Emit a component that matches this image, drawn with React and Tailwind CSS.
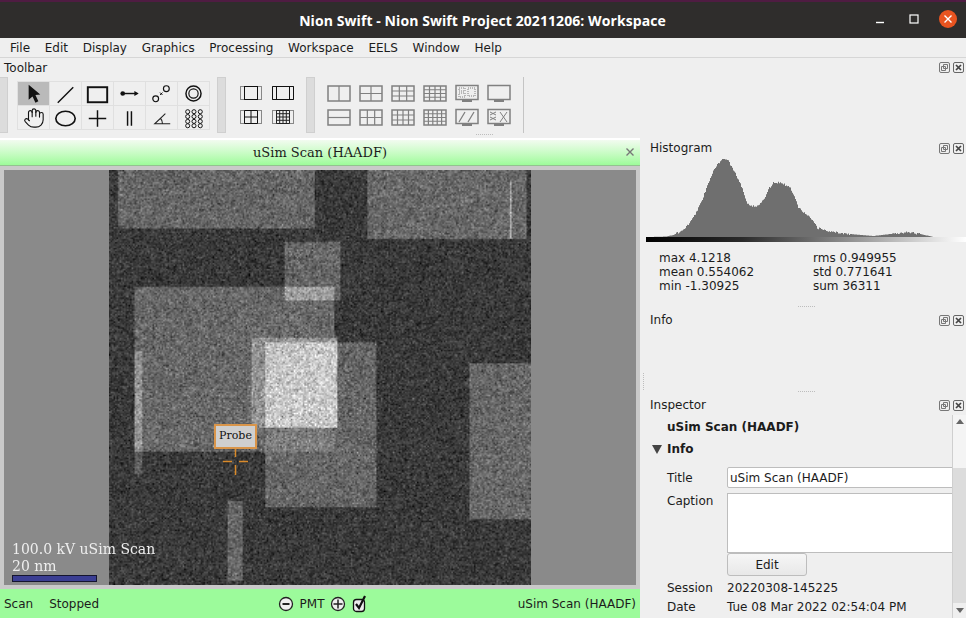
import React, { useEffect, useRef } from "react";
import { Hand } from "lucide-react";

const menus = ["File", "Edit", "Display", "Graphics", "Processing", "Workspace", "EELS", "Window", "Help"];

// histogram outline, in page pixels
const histPoints = [
  [646, 237], [665, 236.6], [673, 235], [683, 230], [690, 222], [696, 212], [702, 200], [707, 185], [712, 173],
  [717, 165], [723, 158], [728, 161], [734, 172], [740, 183], [744, 195], [747, 203], [752, 206], [755, 207],
  [760, 203], [765, 197], [769, 188], [773, 183], [780, 182], [790, 188], [795, 198], [798, 207], [804, 213],
  [810, 218], [817, 228], [828, 231], [840, 233], [855, 234.5], [873, 236], [890, 234], [907, 232], [920, 234],
  [933, 237], [966, 237.5],
];

function rng(seed) {
  let s = seed;
  return () => {
    s = (s + 0x6d2b79f5) | 0;
    let t = Math.imul(s ^ (s >>> 15), 1 | s);
    t = (t + Math.imul(t ^ (t >>> 7), 61 | t)) ^ t;
    return ((t ^ (t >>> 14)) >>> 0) / 4294967296;
  };
}

function histPath() {
  const r = rng(7);
  let d = "M646 237";
  for (let x = 646; x <= 966; x += 1) {
    let i = 0;
    while (i < histPoints.length - 2 && histPoints[i + 1][0] < x) i++;
    const [x0, y0] = histPoints[i];
    const [x1, y1] = histPoints[i + 1];
    const y = y0 + ((y1 - y0) * (x - x0)) / (x1 - x0);
    const jitter = y < 234 ? (r() - 0.5) * 2.2 : 0;
    d += `L${x} ${Math.min(237, y + jitter).toFixed(1)}L${x + 1} ${Math.min(237, y + jitter).toFixed(1)}`;
  }
  return d + "L966 237Z";
}

function inside(x, y, x0, y0, x1, y1) {
  return x >= x0 && x < x1 && y >= y0 && y < y1;
}

function levelAt(x, y) {
  const big = inside(x, y, 135, 287, 335, 452);
  const a = inside(x, y, 251, 338, 337, 429);
  const b = inside(x, y, 265, 343, 377, 508);
  const small = inside(x, y, 284, 242, 341, 300);
  if (a && b) return 200;
  if (a) return 148;
  if (big && small) return 160;
  if (big && b) return 126;
  if (inside(x, y, 135, 352, 142, 452)) return 148;
  if (inside(x, y, 135, 452, 142, 475)) return 98;
  if (big) return 104;
  if (b) return 102;
  if (small) return 102;
  if (inside(x, y, 510, 181, 512, 239)) return 180;
  if (inside(x, y, 118, 170, 315, 229)) return 102;
  if (inside(x, y, 368, 170, 527, 239)) return 104;
  if (inside(x, y, 470, 364, 531, 520)) return 104;
  if (inside(x, y, 227, 502, 242, 581)) return 102;
  return 58;
}

function ScanImage() {
  const ref = useRef(null);
  useEffect(() => {
    const c = ref.current;
    const ctx = c.getContext("2d");
    const img = ctx.createImageData(c.width, c.height);
    const r = rng(42);
    const step = 422 / c.width;
    for (let j = 0; j < c.height; j++) {
      for (let i = 0; i < c.width; i++) {
        const lv = levelAt(109 + (i + 0.5) * step, 170 + (j + 0.5) * step);
        const n = Math.sqrt(-2 * Math.log(r() + 1e-6)) * Math.cos(6.283 * r());
        const v = lv + n * (13 + lv * 0.07);
        const k = (j * c.width + i) * 4;
        img.data[k] = img.data[k + 1] = img.data[k + 2] = v;
        img.data[k + 3] = 255;
      }
    }
    ctx.putImageData(img, 0, 0);
  }, []);
  return <canvas ref={ref} width={281} height={277} className="w-[422px] h-[415px]" />;
}

function Ico({ children }) {
  return (
    <svg width="32" height="24" viewBox="0 0 32 24" fill="none" stroke="#111" strokeWidth="1.5">
      {children}
    </svg>
  );
}

const toolIcons = [
  <path d="M11 2.5V18l4-3.5 3 6.5 3-1.5-3-6.5 5-.5z" fill="#111" stroke="none" />,
  <path d="M8 21 24 5" />,
  <rect x="6" y="5" width="20" height="15.5" strokeWidth="2" />,
  <>
    <circle cx="9" cy="11.5" r="2.4" fill="#111" stroke="none" />
    <path d="M9 11.5h15" />
    <path d="M21 9l4.5 2.5L21 14z" fill="#111" stroke="none" />
  </>,
  <>
    <circle cx="10" cy="17" r="3" strokeWidth="1.2" />
    <circle cx="21" cy="6.5" r="3" strokeWidth="1.2" />
    <path d="M14.5 10.5l2.5 2.5M17 10.5l-2.5 2.5" strokeWidth="1" />
  </>,
  <>
    <circle cx="16" cy="11.5" r="7.8" />
    <circle cx="16" cy="11.5" r="4.8" strokeWidth="1.2" />
  </>,
  null,
  <ellipse cx="16" cy="12.5" rx="10" ry="7.5" strokeWidth="1.7" />,
  <path d="M7 12.5h18M16 4v17" />,
  <path d="M14 5v15M18 5v15" />,
  <path d="M25 18H9L20 7.5M15 12.5c1.5 1.2 2 3 2 5.5" strokeWidth="1.1" stroke="#222" />,
  <>
    {[10, 16.5, 23].flatMap((x) =>
      [5.5, 10.5, 15.5, 20].map((y) => <circle key={`${x}-${y}`} cx={x} cy={y} r="2.1" strokeWidth="1" />)
    )}
  </>,
];

function Layout({ inner }) {
  return (
    <svg width="32" height="24" viewBox="0 0 32 24" fill="none">
      <rect x="5.5" y="5.5" width="21" height="13" stroke="#888" strokeWidth="1" />
      {inner}
    </svg>
  );
}

function GridIcon({ cols, rows }) {
  const lines = [];
  for (let i = 1; i < cols; i++) lines.push(`M${5 + (22 * i) / cols} 5V20`);
  for (let j = 1; j < rows; j++) lines.push(`M5 ${5 + (15 * j) / rows}H27`);
  return (
    <svg width="32" height="24" viewBox="0 0 32 24" fill="none" stroke="#808080" strokeWidth="1.2">
      <rect x="5" y="5" width="22" height="15" strokeWidth="1.5" />
      <path d={lines.join("")} />
    </svg>
  );
}

function Screen({ children }) {
  return (
    <svg width="32" height="24" viewBox="0 0 32 24" fill="none" stroke="#808080" strokeWidth="1.3">
      <rect x="5" y="4.5" width="22" height="14" strokeWidth="1.5" />
      <path d="M11 20h10" strokeWidth="2" />
      {children}
    </svg>
  );
}

const layoutIcons = [
  <GridIcon cols={2} rows={1} />,
  <GridIcon cols={2} rows={2} />,
  <GridIcon cols={3} rows={3} />,
  <GridIcon cols={4} rows={4} />,
  <Screen>
    <path d="M8 7h6v3H8zM17 7h7v8h-7zM8 12h6v4H8z" strokeDasharray="1 1" strokeWidth="1" />
  </Screen>,
  <Screen />,
  <GridIcon cols={1} rows={2} />,
  <GridIcon cols={3} rows={2} />,
  <GridIcon cols={4} rows={3} />,
  <GridIcon cols={5} rows={4} />,
  <Screen>
    <path d="M8 17l6-10M17 17l6-10" />
  </Screen>,
  <Screen>
    <path d="M7 7l6 3M13 7l-6 3M7 12l6 3M13 12l-6 3M17 7l7 10M24 7l-7 10" strokeWidth="1" />
  </Screen>,
];

function Handle() {
  return <div className="w-[9px] h-[56px] bg-[#dcdcdc] border border-[#cfcfcf]" />;
}

function DockIcons() {
  return (
    <div className="flex gap-[3px]">
      <svg width="11" height="11" viewBox="0 0 11 11" fill="none" stroke="#777">
        <rect x="0.5" y="0.5" width="10" height="10" rx="1.5" />
        <path d="M4.5 2.5h4v4h-4zM2.5 4.5h4v4h-4z" />
      </svg>
      <svg width="11" height="11" viewBox="0 0 11 11" fill="none" stroke="#666">
        <rect x="0.5" y="0.5" width="10" height="10" rx="1.5" />
        <path d="M3 3l5 5M8 3L3 8" strokeWidth="1.7" stroke="#444" />
      </svg>
    </div>
  );
}

function Dots({ className }) {
  return <div className={`w-[17px] border-t border-dotted border-[#bdbdbd] ${className}`} />;
}

function PanelTitle({ title }) {
  return (
    <div className="flex items-center justify-between pl-[8px] pr-[2px] h-[20px]">
      <span>{title}</span>
      <DockIcons />
    </div>
  );
}

function Stat({ label, value }) {
  return (
    <div>
      {label} {value}
    </div>
  );
}

export default function App() {
  return (
    <div className="w-[966px] h-[618px] overflow-hidden flex flex-col bg-[#efefef] text-[#1c1c1c] text-[12px] font-['DejaVu_Sans',sans-serif]">
      {/* window title */}
      <div className="h-[38px] shrink-0 flex items-center relative bg-[#2f2d2c] border-t-2 border-[#4f1c42]">
        <div className="flex-1 text-center pr-[1px] text-white text-[14px] tracking-[0.08px] font-bold font-['Open_Sans',sans-serif]">
          Nion Swift - Nion Swift Project 20211206: Workspace
        </div>
        <div className="absolute right-[9px] top-[8px] flex items-center gap-[20px]">
          <svg width="10" height="10" viewBox="0 0 10 10" className="mr-[4px]">
            <path d="M1 8.5h8" stroke="#fff" strokeWidth="1.4" />
          </svg>
          <svg width="10" height="10" viewBox="0 0 10 10" fill="none">
            <rect x="1" y="1" width="8" height="8" stroke="#fff" strokeWidth="1.2" />
          </svg>
          <div className="w-[18px] h-[18px] rounded-full bg-[#e95420] flex items-center justify-center">
            <svg width="10" height="10" viewBox="0 0 10 10">
              <path d="M1.5 1.5l7 7M8.5 1.5l-7 7" stroke="#fff" strokeWidth="1.4" />
            </svg>
          </div>
        </div>
      </div>

      {/* menu bar */}
      <div className="h-[20px] shrink-0 flex items-center gap-[14.7px] pl-[10px] border-b border-[#d6d6d6]">
        {menus.map((m) => (
          <span key={m}>{m}</span>
        ))}
      </div>

      {/* toolbar */}
      <div className="h-[80px] shrink-0 relative">
        <div className="flex items-center justify-between pl-[4px] pr-[2px] h-[19px]">
          <span>Toolbar</span>
          <DockIcons />
        </div>
        <div className="flex items-start">
          <div className="w-[8px] h-[56px] bg-[#dcdcdc] border border-[#cfcfcf] border-l-0" />
          <div className="grid grid-cols-6 w-[193px] ml-[9px] mt-[4px] border-t border-l border-[#e0e0e0]">
            {toolIcons.map((icon, i) => (
              <div
                key={i}
                className={`h-[24px] w-[32px] flex items-center justify-center border-b border-r border-[#e0e0e0] ${
                  i === 0 ? "bg-[#bababa]" : ""
                }`}
              >
                {i === 6 ? <Hand size={22} strokeWidth={1.2} color="#111" /> : <Ico>{icon}</Ico>}
              </div>
            ))}
          </div>
          <div className="ml-[7px]">
            <Handle />
          </div>
          <div className="grid grid-cols-2 w-[64px] ml-[9px] mt-[4px]">
            <Layout inner={<rect x="9.5" y="5.5" width="13" height="13" stroke="#111" />} />
            <Layout inner={<path d="M5.5 5.5h21v13h-21zM9.5 6v12M22.5 6v12" stroke="#111" />} />
            <Layout inner={<path d="M9.5 5.5h13v13h-13zM16 5.5v13M9.5 12h13" stroke="#111" />} />
            <Layout
              inner={
                <path d="M9.5 5.5h13v13h-13zM12.7 5.5v13M16 5.5v13M19.3 5.5v13M9.5 8.7h13M9.5 12h13M9.5 15.3h13" stroke="#222" />
              }
            />
          </div>
          <div className="ml-[7px]">
            <Handle />
          </div>
          <div className="grid grid-cols-6 w-[192px] ml-[8px] mt-[4px]">
            {layoutIcons.map((icon, i) => (
              <div key={i} className="h-[24px] flex items-center justify-center">
                {icon}
              </div>
            ))}
          </div>
          <div className="w-px h-[56px] bg-[#c4c4c4] ml-[8px]" />
        </div>
        <Dots className="absolute left-[476px] top-[76px]" />
      </div>

      <div className="flex-1 flex min-h-0">
        {/* document panel */}
        <div className="w-[640px] flex flex-col border-t-2 border-white">
          <div className="h-[26px] shrink-0 relative flex items-center justify-center bg-gradient-to-b from-[#f2fbf0] to-[#9dfb9a] border-b border-[#93c290] font-['DejaVu_Serif',serif] text-[13px]">
            uSim Scan (HAADF)
            <svg width="10" height="10" viewBox="0 0 10 10" className="absolute right-[5px] top-[7px]">
              <path d="M1.5 1.5l7 7M8.5 1.5l-7 7" stroke="#777" strokeWidth="1.4" />
            </svg>
          </div>
          <div className="flex-1 flex flex-col min-h-0 bg-[#c9c9c9] p-[4px]">
            <div className="relative flex-1 flex justify-center bg-[#8a8a8a] overflow-hidden">
              <ScanImage />
              <div className="absolute left-[8px] top-[371px] text-[#eeeeee] font-['DejaVu_Serif',serif] text-[14px] leading-[17px]">
                <div>100.0 kV uSim Scan</div>
                <div>20 nm</div>
                <div className="w-[85px] h-[7px] bg-[#3b3e93] border border-[#15152f]" />
              </div>
              <div className="absolute left-[210px] top-[254px] w-[43px] h-[25px] flex items-center justify-center bg-[#cfcfcf] border-2 border-[#d9954a] font-['DejaVu_Serif',serif] text-[11px] text-[#111]">
                Probe
              </div>
              <svg width="30" height="30" viewBox="0 0 30 30" className="absolute left-[216px] top-[278px]" stroke="#d98a2b">
                <path d="M15.5 1v8M15.5 17v10M3 13.5h9M19 13.5h9" strokeWidth="1.5" />
              </svg>
            </div>
          </div>
          <div className="h-[29px] shrink-0 flex items-center bg-[#9cfb9b] px-[4px]">
            <div className="flex-1 flex gap-[16px]">
              <span>Scan</span>
              <span>Stopped</span>
            </div>
            <div className="flex items-center gap-[6px] ml-[7px]">
              <svg width="16" height="16" viewBox="0 0 16 16" fill="none" stroke="#222">
                <circle cx="8" cy="8" r="6.5" fill="#eee" strokeWidth="1.3" />
                <path d="M4.5 8h7" strokeWidth="2" />
              </svg>
              <span>PMT</span>
              <svg width="16" height="16" viewBox="0 0 16 16" fill="none" stroke="#222">
                <circle cx="8" cy="8" r="6.5" fill="#eee" strokeWidth="1.3" />
                <path d="M3.5 8h9M8 3.5v9" strokeWidth="1.5" />
              </svg>
              <svg width="17" height="18" viewBox="0 0 17 18" fill="none" stroke="#111">
                <rect x="1.5" y="4.5" width="11" height="12" rx="3" fill="#eee" strokeWidth="1.3" />
                <path d="M4 9l3 4 6-12" strokeWidth="2.2" />
              </svg>
            </div>
            <div className="flex-1 text-right">uSim Scan (HAADF)</div>
          </div>
        </div>

        {/* right docks */}
        <div className="flex-1 relative flex flex-col pl-[2px] min-w-0">
          <div className="shrink-0">
            <PanelTitle title="Histogram" />
          </div>
          <svg width="324" height="89" viewBox="642 156 324 89" className="shrink-0 -mt-[2px]">
            <defs>
              <linearGradient id="ramp">
                <stop offset="0" stopColor="#000" />
                <stop offset="0.3" stopColor="#2a2a2a" />
                <stop offset="1" stopColor="#fff" />
              </linearGradient>
            </defs>
            <path d={histPath()} fill="#6f6f6f" />
            <rect x="646" y="237" width="320" height="5" fill="url(#ramp)" />
          </svg>
          <div className="grid grid-cols-[154px_1fr] pl-[15px] ml-[2px] leading-[14px] mt-[6px] shrink-0">
            <Stat label="max" value="4.1218" />
            <Stat label="rms" value="0.949955" />
            <Stat label="mean" value="0.554062" />
            <Stat label="std" value="0.771641" />
            <Stat label="min" value="-1.30925" />
            <Stat label="sum" value="36311" />
          </div>
          <Dots className="ml-[156px] mt-[13px] shrink-0" />
          <div className="mt-[3px] shrink-0">
            <PanelTitle title="Info" />
          </div>
          <Dots className="ml-[156px] mt-[61px] shrink-0" />
          <div className="mt-[3px] shrink-0">
            <PanelTitle title="Inspector" />
          </div>
          <div className="flex flex-1 min-h-0">
            <div className="flex-1 min-w-0 overflow-hidden pl-[8px]">
              <div className="pl-[17px] font-bold h-[23px] pt-[3px]">uSim Scan (HAADF)</div>
              <div className="flex items-center font-bold h-[22px]">
                <svg width="17" height="12" viewBox="0 0 17 12">
                  <path d="M2 2h10l-5 9z" fill="#444" />
                </svg>
                Info
              </div>
              <div className="pl-[17px] pt-[7px]">
                <div className="flex items-center">
                  <span className="w-[60px] shrink-0">Title</span>
                  <div className="w-[240px] h-[21px] shrink-0 pl-[2px] flex items-center bg-white border border-[#bdbdbd] rounded-[2px]">
                    uSim Scan (HAADF)
                  </div>
                </div>
                <div className="flex mt-[5px]">
                  <span className="w-[60px] shrink-0 leading-[14px] pt-[1px]">Caption</span>
                  <div className="flex flex-col shrink-0">
                    <div className="w-[240px] h-[60px] bg-white border border-[#bdbdbd]" />
                    <div className="w-[80px] h-[23px] flex items-center justify-center bg-gradient-to-b from-[#f6f6f6] to-[#e8e8e8] border border-[#bdbdbd] rounded-[3px]">
                      Edit
                    </div>
                  </div>
                </div>
                <div className="flex mt-[3px] leading-[19px]">
                  <span className="w-[60px] shrink-0">Session</span>
                  <span>20220308-145225</span>
                </div>
                <div className="flex leading-[19px] whitespace-nowrap">
                  <span className="w-[60px] shrink-0">Date</span>
                  <span>Tue 08 Mar 2022 02:54:04 PM</span>
                </div>
              </div>
            </div>
            <div className="w-[14px] shrink-0 flex flex-col bg-[#dcdcdc] border-l border-[#cfcfcf]">
              <div className="h-[53px] shrink-0 bg-[#f4f4f4] flex justify-center pt-[4px]">
                <svg width="8" height="5" viewBox="0 0 8 5">
                  <path d="M0 5l4-5 4 5z" fill="#666" />
                </svg>
              </div>
              <div className="flex-1" />
              <div className="h-[15px] shrink-0 flex justify-center items-center bg-[#efefef]">
                <svg width="8" height="5" viewBox="0 0 8 5">
                  <path d="M0 0l4 5 4-5z" fill="#666" />
                </svg>
              </div>
            </div>
          </div>
          {/* vertical splitter grip */}
          <div className="absolute left-[3px] top-[235px] h-[17px] border-l border-dotted border-[#bdbdbd]" />
        </div>
      </div>
    </div>
  );
}
